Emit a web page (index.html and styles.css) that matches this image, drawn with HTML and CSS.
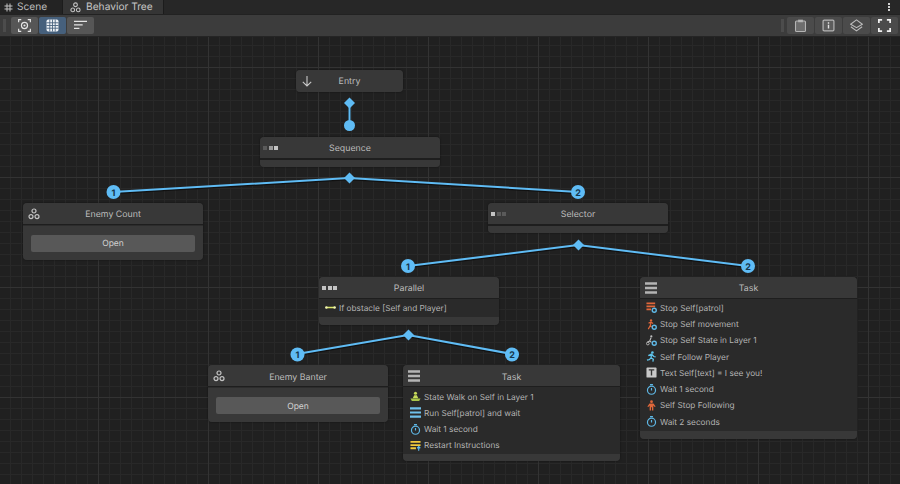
FILE: index.html
```html
<!DOCTYPE html>
<html lang="en">
<head>
<meta charset="utf-8">
<title>Behavior Tree</title>
<link rel="stylesheet" href="styles.css">
</head>
<body>
<svg class="defs" width="0" height="0" aria-hidden="true">
  <defs>
    <symbol id="i-tree" viewBox="0 0 12 12">
      <g fill="none" stroke="currentColor" stroke-width="1.2"><circle cx="6" cy="3" r="2"/><circle cx="3" cy="8.6" r="2"/><circle cx="9" cy="8.6" r="2"/></g>
    </symbol>
    <symbol id="i-timer" viewBox="0 0 12 12">
      <g fill="none" stroke="#5fb8e6" stroke-width="1.3"><circle cx="6" cy="6.8" r="4.4"/></g>
      <path d="M4.4.7h3.2M6 4.4v2.6" stroke="#5fb8e6" stroke-width="1.3" fill="none"/>
    </symbol>
    <symbol id="i-lines" viewBox="0 0 14 12" preserveAspectRatio="none">
      <path d="M0 1.5h14M0 6h14M0 10.5h14" stroke="currentColor" stroke-width="2.4" fill="none"/>
    </symbol>
  </defs>
</svg>
<div class="window">
  <div class="tabs">
    <div class="tab">
      <svg class="tab-ico" viewBox="0 0 9 9"><path d="M3 .5v8M6 .5v8M.5 3h8M.5 6h8" stroke="#c4c4c4" stroke-width="1" fill="none"/></svg>
      <span>Scene</span>
    </div>
    <div class="tab tab-active">
      <svg class="tab-ico-lg"><use href="#i-tree"/></svg>
      <span>Behavior Tree</span>
    </div>
    <div class="tab-fill"></div>
    <div class="kebab"><i></i><i></i><i></i></div>
  </div>
  <div class="toolbar">
    <div class="grip"></div>
    <div class="tool-group">
      <div class="tool">
        <svg class="ico-tool" viewBox="0 0 12 12"><g fill="none" stroke="#e4e4e4" stroke-width="1.1"><path d="M.6 3V.6H3M9 .6h2.4V3M11.4 9v2.4H9M3 11.4H.6V9"/><circle cx="6" cy="6" r="2.8"/></g><circle cx="6" cy="6" r="1" fill="#e4e4e4"/></svg>
      </div>
      <div class="tool tool-on">
        <svg class="ico-tool" viewBox="0 0 12 12"><rect x=".5" y=".5" width="11" height="11" rx="1.5" fill="#eef2f6"/><path d="M3.500 .5v11M6 .5v11M8.500 .5v11M.5 3.500h11M.5 6h11M.5 8.500h11" stroke="#46607c" stroke-width=".8" fill="none"/></svg>
      </div>
      <div class="tool">
        <svg class="ico-tool" viewBox="0 0 12 12"><path d="M0 2.200h12M0 5.400h8M0 8.600h5" stroke="#e4e4e4" stroke-width="1.100" fill="none"/></svg>
      </div>
    </div>
    <div class="tool-spacer"></div>
    <div class="grip grip-r"></div>
    <div class="tool-group">
      <div class="tool tool-dim">
        <svg class="ico-tool" viewBox="0 0 12 12"><rect x="1.400" y="1.800" width="9.200" height="9.700" rx="1" fill="#6d6d6d" stroke="#b4b4b4"/><rect x="3.800" y=".6" width="4.400" height="2.400" fill="#b4b4b4"/></svg>
      </div>
      <div class="tool tool-dim">
        <svg class="ico-tool" viewBox="0 0 12 12"><rect x="1" y="1" width="10" height="10" rx="1" fill="#5c5c5c" stroke="#b4b4b4" stroke-width="1.100"/><path d="M6 3v1.300M6 5.200v3.600" stroke="#e2e2e2" stroke-width="1.300"/></svg>
      </div>
      <div class="tool tool-dim">
        <svg class="ico-tool" viewBox="0 0 12 12"><g fill="none" stroke="#bcbcbc" stroke-width="1"><path d="M6 .8 11.400 4.800 6 8 .6 4.800Z"/><path d="M.8 7.200 6 11l5.200-3.800"/></g></svg>
      </div>
      <div class="tool tool-dim">
        <svg class="ico-tool" viewBox="0 0 12 12"><path d="M.8 3.800V.8h3M8.200 .8h3v3M11.200 8.200v3h-3M3.800 11.200h-3v-3" fill="none" stroke="#f0f0f0" stroke-width="1.600"/></svg>
      </div>
    </div>
  </div>
  <div class="canvas">
    <svg class="wires" viewBox="0 37 900 447">
      <g class="wire-shadow">
        <path d="M349.500 103V125"/>
        <path d="M113 193 349 179 578 193"/>
        <path d="M408 267 578 246 748 267"/>
        <path d="M297 355 408 336 512 355"/>
      </g>
      <g class="wire">
        <path d="M349.500 103V125"/>
        <path d="M113 192 349 178 578 192"/>
        <path d="M408 266 578 245 748 266"/>
        <path d="M297 354 408 335 512 354"/>
      </g>
      <g class="pins">
        <path d="M349.500 97.500 355 103 349.500 108.500 344 103Z"/>
        <circle cx="349.500" cy="125.500" r="5.500"/>
        <path d="M349.500 172.500 355 178 349.500 183.500 344 178Z"/>
        <path d="M578.500 239.500 584 245 578.500 250.500 573 245Z"/>
        <path d="M408.500 329.500 414 335 408.500 340.500 403 335Z"/>
        <circle cx="113.500" cy="192" r="7"/>
        <circle cx="578" cy="192" r="7"/>
        <circle cx="408" cy="266" r="7"/>
        <circle cx="748" cy="266" r="7"/>
        <circle cx="297.500" cy="354.500" r="7"/>
        <circle cx="512" cy="354.500" r="7"/>
      </g>
      <g class="pin-nums">
        <text x="113.500" y="195.500">1</text>
        <text x="578" y="195.500">2</text>
        <text x="408" y="269.500">1</text>
        <text x="748" y="269.500">2</text>
        <text x="297.500" y="358">1</text>
        <text x="512" y="358">2</text>
      </g>
    </svg>

    <div class="node n-entry">
      <div class="head head-solo">
        <svg class="ico-head ico-arrow" viewBox="0 0 12 12"><path d="M6 1v10M1.800 6.800 6 11l4.200-4.200" fill="none" stroke="#c8c8c8" stroke-width="1.100"/></svg>
        <span class="title">Entry</span>
      </div>
    </div>

    <div class="node n-sequence">
      <div class="head">
        <div class="squares"><i class="s1"></i><i class="s2"></i><i class="s3"></i></div>
        <span class="title">Sequence</span>
      </div>
      <div class="foot"></div>
    </div>

    <div class="node n-count">
      <div class="head">
        <svg class="ico-head"><use href="#i-tree"/></svg>
        <span class="title">Enemy Count</span>
      </div>
      <div class="panel"><div class="open">Open</div></div>
    </div>

    <div class="node n-selector">
      <div class="head">
        <div class="squares"><i class="s3"></i><i class="s1"></i><i class="s1"></i></div>
        <span class="title">Selector</span>
      </div>
      <div class="foot"></div>
    </div>

    <div class="node n-parallel">
      <div class="head">
        <div class="squares"><i class="s3"></i><i class="s3"></i><i class="s3"></i></div>
        <span class="title">Parallel</span>
      </div>
      <div class="rows rows-one">
        <div class="row">
          <svg class="ico-row" viewBox="0 0 12 12"><path d="M1.500 6h9" stroke="#dbe86a" stroke-width="1.400"/><circle cx="1.500" cy="6" r="1.400" fill="#f1f5b0"/><circle cx="10.500" cy="6" r="1.400" fill="#f1f5b0"/></svg>
          <span>If obstacle [Self and Player]</span>
        </div>
      </div>
      <div class="foot foot-flat"></div>
    </div>

    <div class="node n-banter">
      <div class="head">
        <svg class="ico-head"><use href="#i-tree"/></svg>
        <span class="title">Enemy Banter</span>
      </div>
      <div class="panel"><div class="open">Open</div></div>
    </div>

    <div class="node node-wide n-task-a">
      <div class="head">
        <svg class="ico-menu"><use href="#i-lines"/></svg>
        <span class="title">Task</span>
      </div>
      <div class="rows">
        <div class="row">
          <svg class="ico-row" viewBox="0 0 12 12"><circle cx="6" cy="2.400" r="1.700" fill="#c8dc5a"/><path d="M4.500 4.500h3L9 8H3Z" fill="#c8dc5a"/><path d="M.5 8.200h11L10 10.800H2Z" fill="#a8c44a"/></svg>
          <span>State Walk on Self in Layer 1</span>
        </div>
        <div class="row">
          <svg class="ico-row ico-blue"><use href="#i-lines"/></svg>
          <span>Run Self[patrol] and wait</span>
        </div>
        <div class="row">
          <svg class="ico-row"><use href="#i-timer"/></svg>
          <span>Wait 1 second</span>
        </div>
        <div class="row">
          <svg class="ico-row" viewBox="0 0 12 12"><path d="M.5 2h11M.5 5.500h11M.5 9h6" stroke="#f0c93c" stroke-width="2" fill="none"/><path d="M9.500 11.800V7.500M7.800 9 9.500 7.200 11.200 9" stroke="#63bdf0" stroke-width="1.200" fill="none"/></svg>
          <span>Restart Instructions</span>
        </div>
      </div>
      <div class="foot foot-flat"></div>
    </div>

    <div class="node node-wide n-task-b">
      <div class="head">
        <svg class="ico-menu"><use href="#i-lines"/></svg>
        <span class="title">Task</span>
      </div>
      <div class="rows">
        <div class="row">
          <svg class="ico-row" viewBox="0 0 12 12"><path d="M.5 1.500h9.500M.5 4.800h9.500M.5 8.100h5" stroke="#e0673a" stroke-width="2" fill="none"/><circle cx="9" cy="9" r="2.200" fill="none" stroke="#5fb8e6" stroke-width="1.500"/></svg>
          <span>Stop Self[patrol]</span>
        </div>
        <div class="row">
          <svg class="ico-row" viewBox="0 0 12 12"><circle cx="5.500" cy="1.500" r="1.300" fill="#e0673a"/><path d="M2.800 4.500 5.500 3.500 7.800 5M5.300 3.800 4.800 7 2.500 11M4.800 7 6 9" stroke="#e0673a" stroke-width="1.300" fill="none"/><circle cx="9" cy="9" r="2.200" fill="none" stroke="#5fb8e6" stroke-width="1.500"/></svg>
          <span>Stop Self movement</span>
        </div>
        <div class="row">
          <svg class="ico-row" viewBox="0 0 12 12"><circle cx="5.800" cy="1.500" r="1.200" fill="#bdbdbd"/><path d="M5.500 3 4 6.500 6 8M4 6.500 1.500 8" stroke="#bdbdbd" stroke-width="1.200" fill="none"/><circle cx="2" cy="9.300" r="1.500" fill="none" stroke="#bdbdbd"/><circle cx="9" cy="9" r="2.200" fill="none" stroke="#5fb8e6" stroke-width="1.500"/></svg>
          <span>Stop Self State in Layer 1</span>
        </div>
        <div class="row">
          <svg class="ico-row" viewBox="0 0 12 12"><circle cx="7" cy="1.600" r="1.400" fill="#5fc4ec"/><path d="M2.500 5 6 3.300 8.500 6l2 .5M6 3.800 5.500 7.500 8 9l-.5 2.500M5.500 7.500 3.500 9.500 1 10" stroke="#5fc4ec" stroke-width="1.400" fill="none"/></svg>
          <span>Self Follow Player</span>
        </div>
        <div class="row">
          <svg class="ico-row" viewBox="0 0 12 12"><rect x=".5" y=".5" width="11" height="11" rx="1" fill="#c8c8c8"/><path d="M3 3.200h6M6 3.200v6" stroke="#333" stroke-width="1.500" fill="none"/></svg>
          <span>Text Self[text] = I see you!</span>
        </div>
        <div class="row">
          <svg class="ico-row"><use href="#i-timer"/></svg>
          <span>Wait 1 second</span>
        </div>
        <div class="row">
          <svg class="ico-row" viewBox="0 0 12 12"><circle cx="6" cy="1.800" r="1.500" fill="#e0673a"/><path d="M3.800 3.700h4.400L10.500 7 9.500 7.600 8 6v5.500H6.500V8h-1v3.500H4V6L2.500 7.600 1.500 7Z" fill="#e0673a"/></svg>
          <span>Self Stop Following</span>
        </div>
        <div class="row">
          <svg class="ico-row"><use href="#i-timer"/></svg>
          <span>Wait 2 seconds</span>
        </div>
      </div>
      <div class="foot foot-flat"></div>
    </div>
  </div>
</div>
</body>
</html>
```

FILE: styles.css
```css
* { box-sizing: border-box; }
html, body { margin: 0; padding: 0; }
body {
  width: 900px;
  height: 484px;
  overflow: hidden;
  background: #202020;
  font-family: Inter, "Liberation Sans", sans-serif;
  color: #c4c4c4;
  text-rendering: geometricPrecision;
}
.defs { position: absolute; }
.window { display: flex; flex-direction: column; width: 900px; height: 484px; }

/* Tabs */
.tabs { display: flex; height: 14px; background: #272727; flex: none; }
.tab {
  display: flex; align-items: center; gap: 4px;
  width: 63px; padding-left: 3px;
  font-size: 10.200px; color: #bdbdbd;
  background: #232323;
  border-right: 1px solid #1c1c1c;
}
.tab-active { width: 101px; padding-left: 7px; gap: 5px; background: #353535; color: #c6c6c6; }
.tab-ico { width: 9px; height: 9px; margin-left: 1px; }
.tab-ico-lg { width: 11px; height: 11px; color: #c4c4c4; }
.tab-fill { flex: 1; }
.kebab { display: flex; flex-direction: column; justify-content: center; gap: 1px; width: 22px; padding-left: 10px; }
.kebab i { width: 2px; height: 2px; background: #cfcfcf; }

/* Toolbar */
.toolbar {
  display: flex; align-items: center; flex: none;
  height: 23px; background: #3c3c3c;
  border-top: 1px solid #222;
  border-bottom: 1px solid #252525;
  padding: 0 2px;
}
.grip { width: 3px; height: 13px; margin: 0 5px 0 1px; background: #4c4c4c; }
.grip-r { margin: 0 3px 0 0; }
.tool-group { display: flex; gap: 1px; }
.tool { display: flex; align-items: center; justify-content: center; width: 27px; height: 17px; background: #565656; border-radius: 2px; }
.tool-on { background: #46607c; }
.tool-dim { background: #4b4b4b; }
.tool-spacer { flex: 1; }
.ico-tool { width: 13px; height: 13px; }

/* Canvas */
.canvas {
  position: relative; flex: 1; overflow: hidden;
  background-color: #202020;
  background-image:
    linear-gradient(#333 1px, transparent 1px),
    linear-gradient(90deg, #333 1px, transparent 1px),
    linear-gradient(#282828 1px, transparent 1px),
    linear-gradient(90deg, #282828 1px, transparent 1px);
  background-size: 110px 110px, 110px 110px, 11px 11px, 11px 11px;
  background-position: 0 30px, 98px 0, 0 8px, 10px 0;
}
.wires { position: absolute; left: 0; top: 0; width: 900px; height: 447px; }
.wire-shadow path { fill: none; stroke: #111; stroke-width: 2.500; }
.wire path { fill: none; stroke: #5fbcf5; stroke-width: 2; }
.pins { fill: #5fbcf5; }
.pin-nums text { font: 700 9px Inter, "Liberation Sans", sans-serif; fill: #16364c; text-anchor: middle; }

/* Nodes */
.node {
  position: absolute;
  display: flex; flex-direction: column;
  width: 180px;
  background: #2a2a2a;
  border-radius: 4px;
  overflow: hidden;
  box-shadow: 0 0 2px rgba(0, 0, 0, .5);
}
.node-wide { width: 217px; }
.n-entry { left: 296px; top: 33px; width: 107px; }
.n-sequence { left: 260px; top: 100px; }
.n-count { left: 23px; top: 166px; }
.n-selector { left: 488px; top: 166px; }
.n-parallel { left: 319px; top: 240px; }
.n-banter { left: 208px; top: 328px; }
.n-task-a { left: 403px; top: 328px; }
.n-task-b { left: 640px; top: 240px; }

.head {
  position: relative; display: flex; align-items: center; justify-content: center;
  height: 22px; background: #383838;
  border-bottom: 1px solid #1e1e1e;
  flex: none;
  padding-top: 1px;
}
.head-solo { border-bottom: 0; padding-top: 1px; }
.n-banter .head, .n-task-a .head { padding-top: 3px; }
.title { font-size: 8.800px; color: #bcbcbc; }
.ico-head { position: absolute; left: 5px; top: 5px; width: 12px; height: 12px; color: #c4c4c4; }
.ico-menu { position: absolute; left: 5px; top: 5px; width: 12px; height: 12px; color: #b4b4b4; }
.squares { position: absolute; left: 3px; top: 9px; display: flex; gap: 1.500px; }
.squares i { width: 4px; height: 4px; }
.s1 { background: #5a5a5a; }
.s2 { background: #9a9a9a; }
.s3 { background: #c4c4c4; }

.foot { height: 8px; background: #383838; flex: none; border-top: 1px solid #1e1e1e; }
.foot-flat { border-top: 0; }
.panel { padding: 9px 8px 8px; background: #383838; height: 35px; border-top: 1px solid #2c2c2c; }
.open {
  display: flex; align-items: center; justify-content: center;
  height: 17px; background: #585858;
  border-radius: 2px;
  font-size: 8.500px; color: #d0d0d0;
}
.n-banter .open { padding-top: 2px; }
.n-count .open { padding-top: 1px; }
.rows { display: flex; flex-direction: column; padding: .8px 0 1.200px; background: #2a2a2a; }
.rows-one { padding: 0 0 1px; }
.n-task-a .rows { padding: 1.400px 0 1px; }
.n-task-a .foot { height: 7px; }
.n-task-a .row { padding-left: 7px; }
.row { display: flex; align-items: center; gap: 3px; height: 16.250px; padding-left: 6px; font-size: 8.250px; color: #b4b4b4; white-space: nowrap; }
.rows-one .row { height: 17px; }
.ico-row { width: 11px; height: 11px; flex: none; }
.ico-blue { color: #6fc0ea; }
```
